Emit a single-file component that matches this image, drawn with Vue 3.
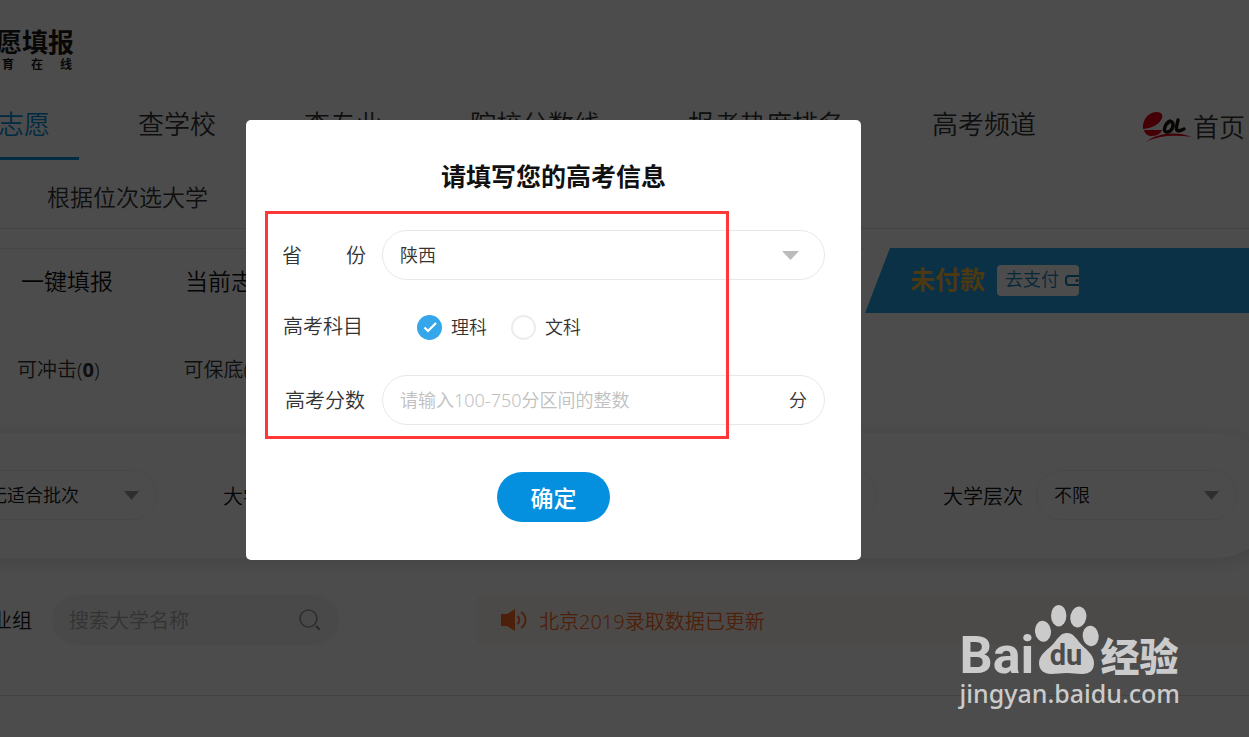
<script setup>
import { ref } from 'vue'

const nav = ['志愿', '查学校', '查专业', '院校分数线', '报考热度排名', '高考频道']
const filters = [
  { id: 'batch', label: '', value: '无适合批次' },
  { id: 'kind', label: '大学类型', value: '不限' },
  { id: 'area', label: '大学地区', value: '不限' },
  { id: 'level', label: '大学层次', value: '不限' },
]
const subjects = ['理科', '文科']
const subject = ref('理科')
const score = ref('')
const keyword = ref('')
</script>

<template>
  <div class="screen">
    <div class="page">
      <header class="brand">
        <div class="brand-name">愿填报</div>
        <div class="brand-sub"><span>育</span><span>在</span><span>线</span></div>
      </header>

      <nav class="nav">
        <a v-for="(item, i) in nav" :key="item" href="#" :class="{ active: i === 0 }">{{ item }}</a>
        <a href="#" class="home">
          <svg width="50" height="32" viewBox="0 0 50 32" aria-hidden="true">
            <path d="M1 18C0 8 7 1 15 1C20 1 22 5 19 9C16 14 10 17 1 18Z" fill="#e60012" />
            <path d="M2 19H20C19 22 15 25 10 25C6 25 3 23 2 19Z" fill="#e60012" />
            <path d="M4 31C15 22 34 20 50 26C34 24 18 24 4 31Z" fill="#e60012" />
            <path d="M28 10C23 12 21 20 24 21C29 22 33 15 30 11C29 10 27 10 26 12M36 9C35 14 33 19 36 20C38 20 40 19 42 18" fill="none" stroke="#1b120e" stroke-width="3.400" stroke-linecap="round" />
          </svg>
          <span>首页</span>
        </a>
      </nav>

      <div class="subnav"><a href="#">根据位次选大学</a></div>

      <section class="summary">
        <div class="tabs">
          <a href="#">一键填报</a>
          <a href="#">当前志愿</a>
        </div>
        <div class="pay">
          <strong>未付款</strong>
          <button type="button">
            <span>去支付</span>
            <svg width="18" height="12" viewBox="0 0 18 12" aria-hidden="true">
              <rect x="1" y="1" width="20" height="9" rx="3" fill="none" stroke="#1482bb" stroke-width="2" />
              <circle cx="12" cy="5.500" r="1.500" fill="#1482bb" />
            </svg>
          </button>
        </div>
      </section>

      <div class="counts">
        <span>可冲击(<b>0</b>)</span>
        <span>可保底(<b>0</b>)</span>
      </div>

      <section class="filters">
        <div v-for="f in filters" :key="f.id" class="filter">
          <label v-if="f.label" :for="f.id">{{ f.label }}</label>
          <div class="pick" :class="{ first: !f.label }">
            <select :id="f.id" :aria-label="f.label || '批次'"><option>{{ f.value }}</option></select>
            <svg width="15" height="9" viewBox="0 0 15 9" aria-hidden="true"><path d="M0 0H15L7.500 9Z" fill="#999" /></svg>
          </div>
        </div>
      </section>

      <section class="tools">
        <label for="search">业组</label>
        <div class="search">
          <input id="search" v-model="keyword" type="text" placeholder="搜索大学名称" />
          <svg width="24" height="24" viewBox="0 0 24 24" aria-hidden="true">
            <circle cx="10.500" cy="10.500" r="8.500" fill="none" stroke="#999" stroke-width="1.700" />
            <path d="M18.500 18.500L21 21" stroke="#888" stroke-width="2" stroke-linecap="round" />
          </svg>
        </div>
        <p class="notice">
          <svg width="26" height="24" viewBox="0 0 26 24" aria-hidden="true">
            <path d="M0 6H6L14 1V23L6 18H0Z" fill="#ff6c24" />
            <path d="M16.500 8C19 10 19 14 16.500 16M20 4C26 8 26 16 20 20" fill="none" stroke="#ff6c24" stroke-width="2" />
          </svg>
          <span>北京2019录取数据已更新</span>
        </p>
      </section>
    </div>

    <div class="mask">
      <form class="dialog" @submit.prevent>
        <h2>请填写您的高考信息</h2>
        <div class="row">
          <label class="name spread" for="province"><span>省</span><span>份</span></label>
          <div class="field">
            <select id="province"><option>陕西</option></select>
            <svg width="17" height="9" viewBox="0 0 17 9" aria-hidden="true"><path d="M0 0H17L8.500 9Z" fill="#bbb" /></svg>
          </div>
        </div>
        <fieldset class="row radios">
          <legend class="name">高考科目</legend>
          <label v-for="s in subjects" :key="s" class="radio">
            <input v-model="subject" type="radio" name="subject" :value="s" />
            <svg v-if="subject === s" width="25" height="25" viewBox="0 0 25 25" aria-hidden="true">
              <path d="M7.500 12.500L11 16L19 8" fill="none" stroke="#fff" stroke-width="2.200" />
            </svg>
            <span>{{ s }}</span>
          </label>
        </fieldset>
        <div class="row">
          <label class="name score" for="score">高考分数</label>
          <div class="field">
            <input id="score" v-model="score" type="text" placeholder="请输入100-750分区间的整数" />
            <span>分</span>
          </div>
        </div>
        <button type="submit" class="ok">确定</button>
        <div class="marker"></div>
      </form>
    </div>

    <div class="watermark">
      <div class="wm-top">
        <span class="wm-bai">Bai</span>
        <svg width="66" height="72" viewBox="0 0 66 72" aria-hidden="true">
          <g fill="#cbcbcb">
            <ellipse cx="9" cy="27.300" rx="8" ry="10.500" transform="rotate(-6 9 27.300)" />
            <ellipse cx="24.700" cy="11.700" rx="7.700" ry="10.800" />
            <ellipse cx="44.300" cy="13" rx="8" ry="10.500" transform="rotate(12 44.300 13)" />
            <ellipse cx="56.700" cy="32" rx="8" ry="10.300" transform="rotate(-6 56.700 32)" />
            <path d="M33 29C27 29 24 34 20 39C15 45 5 50 5 59C5 66 10 70 17 70C23 70 27 69 33 69C39 69 42 70 48 70C56 70 60 66 60 59C60 50 51 45 46 39C42 34 39 29 33 29Z" />
          </g>
          <text x="32" y="61" text-anchor="middle">du</text>
        </svg>
        <span class="wm-cn">经验</span>
      </div>
      <div class="wm-url">jingyan.baidu.com</div>
    </div>
  </div>
</template>

<style>
body {
  margin: 0;
  background: #fff;
}
</style>

<style scoped>
.screen {
  position: relative;
  min-height: 100vh;
  overflow: hidden;
  box-sizing: border-box;
  font-family: "Noto Sans", "Noto Sans CJK SC", sans-serif;
  font-weight: 350;
  color: #333;
}
.screen * { box-sizing: border-box; }
a { color: inherit; text-decoration: none; white-space: nowrap; }
button, input, select { font: inherit; color: inherit; border: 0; background: none; margin: 0; padding: 0; outline: 0; }
select { appearance: none; }

.brand {
  height: 90px;
  padding-top: 28px;
  color: #211815;
  font-weight: 700;
}
.brand-name { margin-left: -4px; font-size: 26px; line-height: 28px; }
.brand-sub { display: flex; gap: 17px; margin-left: 2px; font-size: 12px; line-height: 18px; }

.nav {
  display: flex;
  gap: 88px;
  height: 70px;
  margin-left: -2px;
  font-size: 26px;
  line-height: 68px;
}
.nav .active { position: relative; color: #0590df; }
.nav .active::after {
  content: "";
  position: absolute;
  left: 0;
  right: -29px;
  bottom: 0;
  height: 3px;
  background: #0590df;
}
.nav .home { display: flex; align-items: center; gap: 1px; margin-left: auto; padding: 4px 4px 0 0; }

.subnav {
  height: 69px;
  padding-left: 47px;
  border-bottom: 1px solid #ddd;
  font-size: 23px;
  line-height: 74px;
}

.summary { display: flex; height: 65px; margin-top: 19px; }
.tabs {
  display: flex;
  gap: 72px;
  flex: 1;
  min-width: 0;
  padding-left: 21px;
  border-top: 1px solid #e6e6e6;
  font-size: 23px;
  line-height: 64px;
  color: #111;
}
.pay {
  display: flex;
  align-items: center;
  gap: 12px;
  flex: 0 0 384px;
  padding-left: 45px;
  background: #22a3e6;
  clip-path: polygon(25px 0, 100% 0, 100% 100%, 0 100%);
}
.pay strong { font-size: 25px; line-height: 32px; padding-bottom: 4px; font-weight: 700; color: #f8c03c; }
.pay button {
  display: flex;
  align-items: center;
  gap: 6px;
  width: 82px;
  height: 31px;
  padding-left: 8px;
  overflow: hidden;
  border-radius: 4px;
  background: #fff;
  font-size: 18px;
  line-height: 28px;
  color: #1482bb;
  white-space: nowrap;
}
.pay button span { padding-bottom: 3px; }
.pay button svg { flex: none; }

.counts { display: flex; gap: 84px; height: 120px; padding-left: 17px; font-size: 20px; line-height: 113px; }
.counts b { font-weight: 700; }

.filters {
  display: flex;
  align-items: center;
  gap: 66px;
  height: 125px;
  margin: 0 -29px 0 -44px;
  padding-bottom: 1px;
  border-radius: 0 62px 62px 0;
  box-shadow: 0 4px 20px rgba(0, 0, 0, 0.12);
  font-size: 20px;
  color: #111;
}
.filter { display: flex; align-items: center; gap: 13px; flex: none; }
.pick { position: relative; width: 201px; font-size: 18px; }
.pick select { width: 100%; height: 50px; padding-left: 17px; border: 1px solid #eee; border-radius: 25px; }
.pick.first select { padding-left: 32px; }
.pick svg { position: absolute; right: 18px; top: 21px; }

.tools {
  display: flex;
  align-items: center;
  height: 138px;
  padding-bottom: 14px;
  border-bottom: 1px solid #ddd;
  font-size: 20px;
  color: #111;
}
.tools label { margin: 0 20px 0 -8px; white-space: nowrap; }
.search {
  display: flex;
  align-items: center;
  width: 287px;
  height: 50px;
  padding: 0 17px;
  border-radius: 25px;
  background: #f5f5f5;
}
.search input { flex: 1; min-width: 0; height: 50px; padding-top: 2px; }
.search input::placeholder { color: #aaa; opacity: 1; }
.notice {
  display: flex;
  align-items: center;
  gap: 12px;
  flex: 1;
  height: 50px;
  margin: 0 0 0 137px;
  padding-left: 25px;
  border-radius: 6px;
  background: #fff8f1;
  color: #ff6c24;
}
.notice span { padding-top: 2px; }

.mask {
  position: absolute;
  inset: 0;
  display: flex;
  justify-content: center;
  align-items: flex-start;
  padding: 120px 142px 0 0;
  background: rgba(0, 0, 0, 0.7);
}
.dialog {
  position: relative;
  width: 615px;
  padding: 37px 36px 38px;
  border-radius: 5px;
  background: #fff;
}
h2 { margin: 0 0 35px; font-size: 25px; line-height: 38px; font-weight: 700; text-align: center; color: #111; }
.row { display: flex; align-items: center; height: 50px; margin: 0 0 22px; padding: 0; border: 0; }
.radios { margin-bottom: 23px; }
.name { flex: none; width: 84px; margin-right: 16px; padding: 0 0 2px 1px; font-size: 20px; white-space: nowrap; }
.spread { display: flex; justify-content: space-between; padding-left: 0; }
.score { padding-left: 3px; }
.radios .name { float: left; margin-right: 51px; padding-bottom: 3px; }
.field {
  display: flex;
  align-items: center;
  flex: 1;
  height: 50px;
  padding: 0 17px;
  border: 1px solid #e8e8e8;
  border-radius: 25px;
  font-size: 18px;
}
.field select, .field input { flex: 1; min-width: 0; height: 48px; }
.field input::placeholder { color: #c0c0c0; opacity: 1; }
.field span { padding-bottom: 2px; }
.field svg { margin-right: 8px; }
.radio { display: flex; align-items: center; gap: 9px; position: relative; margin-right: 24px; font-size: 18px; }
.radio input { appearance: none; width: 25px; height: 25px; border: 2px solid #ececec; border-radius: 50%; }
.radio input:checked { border: 0; background: #35a6ea; }
.radio svg { position: absolute; left: 0; }
.radio span { padding-bottom: 2px; }
.ok {
  display: block;
  width: 113px;
  height: 50px;
  margin: 47px auto 0;
  padding-bottom: 1px;
  border-radius: 25px;
  background: #0590df;
  color: #fff;
  font-size: 23px;
  font-weight: 500;
}
.marker {
  position: absolute;
  left: 19px;
  top: 91px;
  width: 464px;
  height: 228px;
  border: 3px solid #fe3838;
  pointer-events: none;
}

.watermark { position: absolute; right: 69px; bottom: 26px; color: #cbcbcb; }
.wm-top { display: flex; align-items: flex-end; height: 72px; }
.wm-bai { font: 700 52px/52px Roboto, sans-serif; margin-bottom: -6px; }
.wm-cn { font-size: 39px; line-height: 40px; font-weight: 900; }
.wm-url { font-size: 25px; line-height: 35px; font-weight: 500; }
.watermark text { font: 700 29px Roboto, sans-serif; fill: #4c4c4c; }
</style>
